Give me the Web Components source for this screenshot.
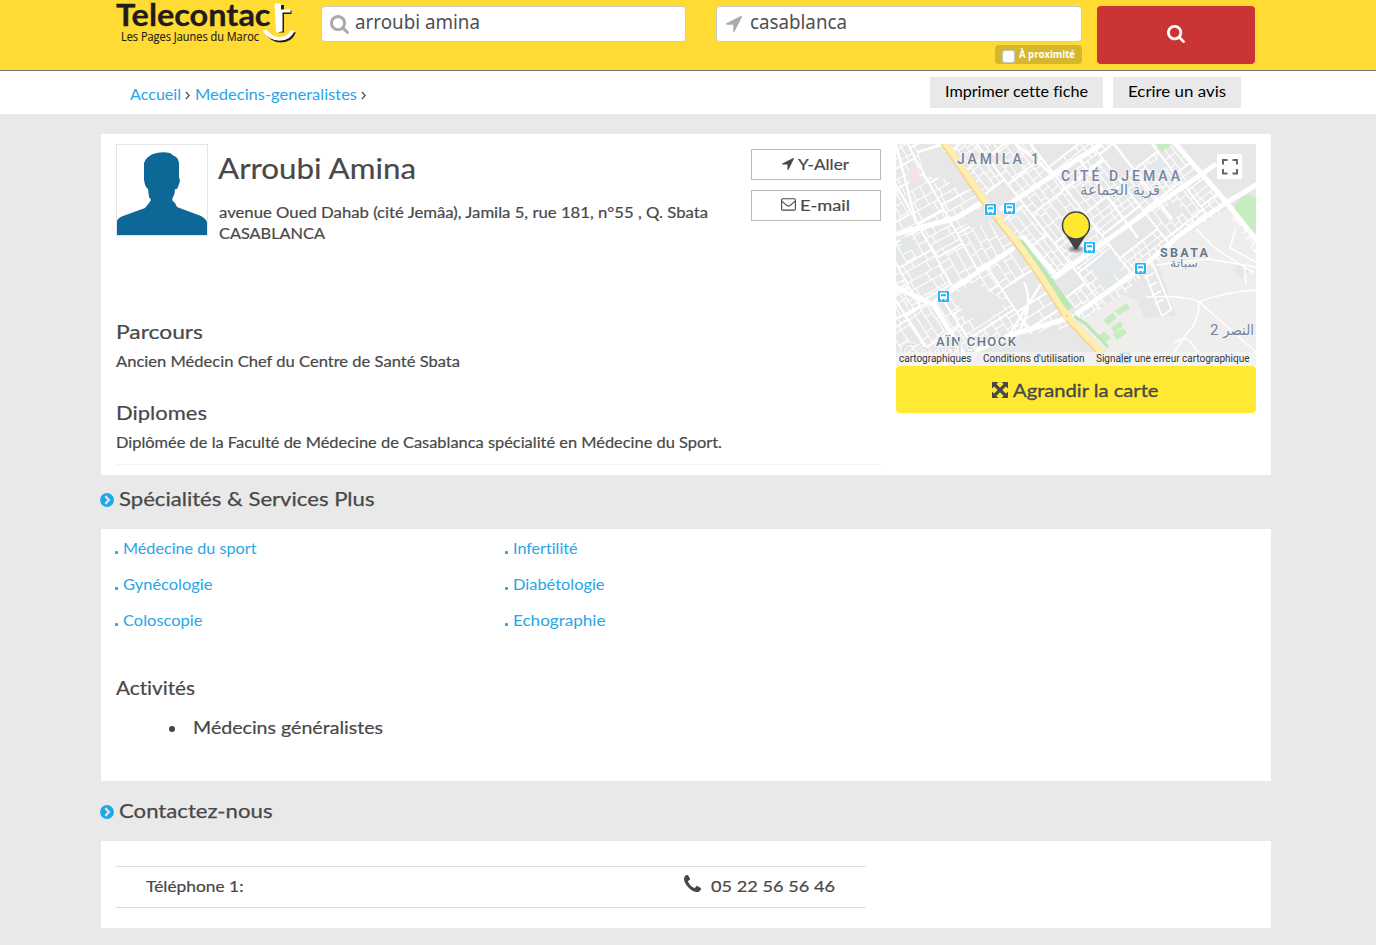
<!DOCTYPE html>
<html lang="fr">
<head>
<meta charset="utf-8">
<title>Arroubi Amina - Telecontact</title>
<style>
body{margin:0;background:#e9e9e9;color:#484848;font-family:Lato,"Noto Sans",sans-serif;font-variant-ligatures:none;height:945px;overflow:hidden}
</style>
</head>
<body>
<tc-page></tc-page>
<script>
const fits = [];
function define(name, css, html, after) {
  customElements.define(name, class extends HTMLElement {
    connectedCallback() {
      if (this.shadowRoot) return;
      const root = this.attachShadow({mode: 'open'});
      const markup = typeof html === 'function' ? html(this) : html;
      root.innerHTML = `<style>:host{display:block;box-sizing:border-box}*{box-sizing:border-box}${css}</style>${markup}`;
      if (after) after(this, root);
    }
  });
}

/* One line of text stretched to a given width: w, size, h (line height), weight. */
define('tc-text', `:host{display:inline-block;white-space:nowrap;flex:none}span{display:inline-block;transform-origin:0 50%;-webkit-text-stroke:var(--stroke,0)}`,
  el => `<style>:host{width:${el.getAttribute('w')}px;font-size:${el.getAttribute('size')}px;line-height:${el.getAttribute('h')}px;height:${el.getAttribute('h')}px;font-weight:${el.getAttribute('weight') || 400}}</style><span><slot></slot></span>`,
  (el, root) => fits.push([el, root.querySelector('span')]));

const FA = {
  search: 'M1216 832q0-185-131.5-316.5t-316.5-131.5-316.5 131.5-131.5 316.5 131.5 316.5 316.5 131.5 316.5-131.5 131.5-316.5zm512 832q0 52-38 90t-90 38q-54 0-90-38l-343-342q-179 124-399 124-143 0-273.5-55.5t-225-150-150-225-55.5-273.5 55.5-273.5 150-225 225-150 273.5-55.5 273.5 55.5 225 150 150 225 55.5 273.5q0 220-124 399l343 343q37 37 37 90z',
  arrow: 'M1593 349l-640 1280q-17 35-57 35-5 0-15-2-22-5-35.5-22.5t-13.5-39.5v-576h-576q-22 0-39.5-13.5t-22.5-35.5 4-42 29-30l1280-640q13-7 29-7 27 0 45 19 15 14 18.5 34.5t-6.5 39.5z',
  phone: 'M1600 1240q0 27-10 70.5t-21 68.5q-21 50-122 106-94 51-186 51-27 0-53-3.5t-57.5-12.5-47-14.5-55.5-20.5-49-18q-98-35-175-83-127-79-264-216t-216-264q-48-77-83-175-3-9-18-49t-20.5-55.5-14.5-47-12.5-57.5-3.5-53q0-92 51-186 56-101 106-122 25-11 68.500-21t70.500-10q14 0 21 3 18 6 53 76 11 19 30 54t35 63.500 31 53.500q3 4 17.500 25t21.500 35.500 7 28.500q0 20-28.500 50t-62 55-62 53-28.500 46q0 9 5 22.500t8.500 20.500 14 24 11.500 19q76 137 174 235t235 174q2 1 19 11.500t24 14 20.500 8.500 22.500 5q18 0 46-28.500t53-62 55-62 50-28.500q14 0 28.500 7t35.500 21.500 25 17.500q25 15 53.500 31t63.500 35 54 30q70 35 76 53 3 7 3 21z'
};
const ICONS = {
  search: `<svg viewBox="64 128 1664 1664"><path fill="currentColor" d="${FA.search}"/></svg>`,
  arrow: `<svg viewBox="190 256 1410 1410"><path fill="currentColor" d="${FA.arrow}"/></svg>`,
  phone: `<svg viewBox="192 128 1408 1408"><path fill="currentColor" d="${FA.phone}"/></svg>`,
  mail: `<svg viewBox="0 0 15 13" fill="none" stroke="currentColor" stroke-width="1.1"><rect x=".6" y=".7" width="13.8" height="11.4" rx="1.2"/><path d="M.8 3.2q2.500 2.300 4.800 4 1.900 1.500 3.800 0 2.300-1.700 4.800-4"/></svg>`,
  expand: `<svg viewBox="0 0 16 16"><path fill="currentColor" d="M.5 0h6L4.400 2.100 8 5.700l3.600-3.600L9.500 0h6q.5 0 .5.500v6l-2.100-2.100L10.300 8l3.600 3.600L16 9.500v6q0 .5-.5.500h-6l2.100-2.100L8 10.300l-3.600 3.600L6.500 16h-6Q0 16 0 15.500v-6l2.100 2.100L5.700 8 2.100 4.400 0 6.500v-6Q0 0 .5 0Z"/></svg>`,
  chevron: `<svg viewBox="0 0 14 14"><circle cx="7" cy="7" r="6.900" fill="#1ca8e8"/><path d="M5.300 3.300 9 7l-3.700 3.700" fill="none" stroke="#e9e9e9" stroke-width="2.200"/></svg>`,
  angle: `<svg viewBox="0 0 5 9"><path d="M.8.800 4.200 4.500.800 8.200" fill="none" stroke="currentColor" stroke-width="1.200"/></svg>`
};
define('tc-icon', `:host{flex:none}svg{display:block;width:100%;height:100%}`,
  el => `<style>:host{width:${el.getAttribute('s')}px;height:${el.getAttribute('hs') || el.getAttribute('s')}px}</style>${ICONS[el.getAttribute('name')]}`);

define('tc-logo', `:host{width:181px;height:46px;flex:none;position:relative;color:#1f1c1a}
  tc-text{display:block}.tag{margin:-1px 0 0 5px;font-family:"Open Sans","Noto Sans",sans-serif;--stroke:.15px #1f1c1a}
  .name{--stroke:.3px #1f1c1a}
  svg{position:absolute;left:144px;top:0}`,
  `<tc-text class="name" w="154.500" size="31" h="29" weight="700">Telecontac</tc-text>
   <tc-text class="tag" w="138" size="12" h="18">Les Pages Jaunes du Maroc</tc-text>
   <svg width="38" height="46" viewBox="0 0 38 46">
    <path d="M18 5h6v27.500h-5zM24 10.500h7.500v3.500H24z" fill="#1f1c1a"/>
    <path d="M14.500 3.500h6.500v6h9.500v3h-8V31.500l-6.500 1z" fill="#fff"/>
    <path d="M5 33q5 7 14 7.500 8 0 13.500-7.500l3.500-1q-4 10.500-15 10.500Q11 42.500 5 33z" fill="#1f1c1a"/>
    <path d="M2.500 30.500 7 30q5 7 13 7 8-.5 11-7l3.500 1q-4 9.500-14.500 9.500-11.500 0-17.500-10z" fill="#fff"/></svg>`);

define('tc-field', `:host{height:36px;background:#fff;border:1px solid #ccc;border-radius:4px;display:flex;align-items:flex-start;flex:none;color:#505050;font-family:"Noto Sans",sans-serif}
  ::slotted(tc-icon){color:#aaa}`, `<slot></slot>`);

define('tc-header', `:host{height:71px;background:#ffdb33;border-bottom:1px solid #777;display:flex;align-items:flex-start;padding:0 0 0 116px}
  .q{width:365px;margin:6px 0 0 24px}.q tc-icon{margin:8px 5.500px 0 8px}
  .where{margin:6px 0 0 30px;width:366px;display:flex;flex-direction:column;align-items:flex-end;gap:3px}
  .where tc-field{width:366px}.where tc-field tc-icon{margin:9px 8px 0 9px}
  .near{height:19px;width:87px;background:#d5b72f;border-radius:4px;display:flex;color:#fff;font-family:"Open Sans",sans-serif;padding-left:7px}
  .box{width:13px;height:13px;border:1px solid #c5c5c5;border-radius:3px;background:#fff;margin:5px 4px 0 0}
  button{width:158px;height:58px;margin:6px 0 0 15px;border:0;border-radius:4px;background:#ca3435;color:#fff;display:flex;align-items:center;justify-content:center;padding:0 0 3px}`,
  `<tc-logo></tc-logo>
   <tc-field class="q"><tc-icon name="search" s="19"></tc-icon><tc-text w="125" size="19.500" h="29">arroubi amina</tc-text></tc-field>
   <div class="where"><tc-field><tc-icon name="arrow" s="16"></tc-icon><tc-text w="97" size="19.500" h="29">casablanca</tc-text></tc-field>
   <div class="near"><i class="box"></i><tc-text w="56" size="10.500" h="18" weight="700">À proximité</tc-text></div></div>
   <button><tc-icon name="search" s="18"></tc-icon></button>`);

define('tc-action', `:host{height:31px;background:#e9e9e9;color:#000;display:flex;justify-content:center;padding-top:3px}`, `<slot></slot>`);
define('tc-crumbs', `:host{height:43px;background:#fff;display:flex;padding-left:130px;align-items:flex-start}
  .c{color:#26a5e8;margin-top:13px}.s{margin:20px 5px 0 4px;color:#444}.grow{flex:1}
  tc-action{margin-top:6px}.p{width:173px;margin-right:10px}.w{width:128px;margin-right:135px}`,
  `<tc-text class="c" w="51" size="15.500" h="21">Accueil</tc-text><tc-icon class="s" name="angle" s="5" hs="9"></tc-icon>
   <tc-text class="c" w="162" size="15.500" h="21">Medecins-generalistes</tc-text><tc-icon class="s" name="angle" s="5" hs="9"></tc-icon>
   <span class="grow"></span>
   <tc-action class="p"><tc-text w="143" size="15.500" h="22">Imprimer cette fiche</tc-text></tc-action>
   <tc-action class="w"><tc-text w="98" size="15.500" h="22">Ecrire un avis</tc-text></tc-action>`);

define('tc-card', `:host{background:#fff;width:1170px}`, `<slot></slot>`);
define('tc-title', `:host{display:flex;align-items:flex-start;height:24px;gap:5px}tc-icon{margin-top:5px}`, `<tc-icon name="chevron" s="14"></tc-icon><slot></slot>`);

define('tc-avatar', `:host{width:92px;height:92px;border:1px solid #e5e5e5;flex:none}svg{display:block}`,
  `<svg width="90" height="90" viewBox="0 0 90 90"><path fill="#0d6897" d="M0 90V76Q1 73 6 71L28 63 32 58 34 55 32 52 31 44Q28 42 27 35V18Q29 12 36 9 44 6 53 8L57 11Q61 12 62 18V32L63 36 61 42Q60 45 58 44 58 49 56 52L55 55 58 58 60 62 84 71Q89 74 90 77V90Z"/></svg>`);

define('tc-outline-button', `:host{width:130px;height:31px;border:1px solid #bbb;display:flex;align-items:center;justify-content:center;padding:0 1px 2px 0}`, `<slot></slot>`);

/* Map drawing: each city block gets its own lot size and lot direction, in a rotated frame. */
let seed = 11;
const rnd = () => (seed = (seed * 16807) % 2147483647) / 2147483647;
function streets(clip, angle, lo, hi) {
  let d = '', main = '';
  for (let bx = -300; bx < 300;) {
    const bw = 24 + rnd() * 34;
    main += `M${bx.toFixed(1)} -260v520`;
    for (let by = -260; by < 260;) {
      const bh = 18 + rnd() * 26, across = rnd() < .5, empty = rnd() < .1;
      main += `M${bx.toFixed(1)} ${by.toFixed(1)}h${bw.toFixed(1)}`;
      const long = across ? bw : bh, short = across ? bh : bw;
      for (let r = 0; r < short - .01 && !empty;) {
        const step = Math.min(short - r, lo + rnd() * (hi - lo));
        for (let q = lo * rnd(); q < long; q += lo + rnd() * lo * 2.5) {
          d += across ? `M${(bx + q).toFixed(1)} ${(by + r).toFixed(1)}v${step.toFixed(1)}` : `M${(bx + r).toFixed(1)} ${(by + q).toFixed(1)}h${step.toFixed(1)}`;
        }
        r += step;
        d += across ? `M${bx.toFixed(1)} ${(by + r).toFixed(1)}h${bw.toFixed(1)}` : `M${(bx + r).toFixed(1)} ${by.toFixed(1)}v${bh.toFixed(1)}`;
      }
      by += bh;
    }
    bx += bw;
  }
  return `<g clip-path="url(#${clip})"><g transform="translate(180 111) rotate(${angle})" fill="none" stroke="#fff"><path d="${d}" stroke-width="1.1"/><path d="${main}" stroke-width="2"/></g></g>`;
}
const bus = (x, y) => `<g transform="translate(${x} ${y})"><rect x="-6" y="-6" width="12" height="12" rx="1" fill="#fff"/><rect x="-5.500" y="-5.500" width="11" height="11" rx="1" fill="#22b4f5"/><path fill="#fff" fill-rule="evenodd" d="M-2.500-4h5q1 0 1 1v5.500h-.8V4h-1.500V2.500h-2.400V4h-1.500V2.500h-.8V-3q0-1 1-1zM-2.500-2.200v2h5v-2z"/></g>`;
const label = (x, y, w, size, t, c = '#7385a0', wt = 500) => `<text x="${x}" y="${y}" textLength="${w}" font-family="Roboto" font-size="${size}" font-weight="${wt}" fill="${c}" stroke="#f4f4f4" stroke-width="2" paint-order="stroke">${t}</text>`;
const arab = (x, y, w, size, t) => `<text x="${x}" y="${y}" direction="rtl" text-anchor="end" textLength="${w}" lengthAdjust="spacingAndGlyphs" font-family="DejaVu Sans" font-size="${size}" fill="#7385a0" stroke="#f4f4f4" stroke-width="2" paint-order="stroke">${t}</text>`;

define('tc-map', `:host{width:360px}.map{height:222px;display:block}.enlarge{height:47px;background:#ffe933;border-radius:4px;display:flex;align-items:center;justify-content:center;gap:5px;padding-right:2px}`,
  () => `<svg class="map" width="360" height="222" viewBox="0 0 360 222">
  <defs>
   <clipPath id="nw"><path d="M0 0H48L88 56 60 72 0 88zM88 60 100 76 120 100 72 134 0 180V92l60-16z"/></clipPath>
   <clipPath id="sw"><path d="M0 135 36 160 70 130 118 102 180 184 100 194 60 222H0z"/></clipPath>
   <clipPath id="ne"><path d="M52 0H280L330 60 240 128 180 165 122 96 102 68z"/></clipPath>
   <clipPath id="se"><path d="M328 60 262 110 240 132 185 166 184 178 232 148 240 138 262 118 285 92 330 66 346 80 360 98V110L328 62z"/></clipPath>
   <radialGradient id="sh"><stop stop-color="#000" stop-opacity=".55"/><stop offset="1" stop-color="#000" stop-opacity="0"/></radialGradient>
  </defs>
  <path fill="#e7e7e7" d="M0 0h360v222H0z"/>
  <path fill="#efeeed" d="M262 118 285 94 312 76 332 64 360 100V222H216L181 180 225 150 280 172z"/>
  ${streets('nw', -29, 7, 11)}${streets('sw', -33, 7, 11)}${streets('ne', -38, 5.5, 9)}${streets('se', -36, 6, 10)}
  <path fill="#e7e7e7" d="M22 8 44 3 78 44 66 48 50 35 30 32zM284 0H360V38L330 57zM66 76 88 62 98 76 76 84zM58 152l20-14 32 20-18 18-22-2zM238 150l12-10 30 32-32 2zM130 196l46-14 26 26h-60z"/>
  <path fill="#f3e3e2" d="M10 28 21 23l5 13-11 5z"/><path fill="#e1e6e9" d="M4 95 15 91l4 13-11 5z"/>
  <path fill="#e4e8eb" d="m194 122 20-18 13 19-19 21zM252 23l11-9 8 7-11 9zM268 66l11-8 8 9-11 9zM336 126l11-8 8 8-10 8z"/>
  <path fill="#c6edbf" d="M260 0h17l-12 8zM339 62q4-10 14-11l7 3v34q-10-3-15-12-8-6-6-14zM200 104l6-4 1 2-6 4z"/>
  <path fill="#c6edbf" d="m207 176 10-7 4 5-9 7zM219 167l12-8 3 5-11 7zM202 192l6-5 7 7-6 5zM215 184l9-7 3 5-9 7zM217 190l10-6 4 5-10 7z"/>
  <g fill="none" stroke="#fff" stroke-linejoin="round">
   <path stroke-width="5" d="M0 90 60 74 88 57M104 66 180 16 206 0M70 136 36 160 0 143M118 104 70 136"/>
   <path stroke-width="5" d="M158 134 206 100 250 68 306 30 320 20M180 170 240 128 285 90 328 60 362 40"/>
   <path stroke-width="5" d="M278-2 330 58 362 98M184 171 117 190 45 222M36 158 70 214M126 92l36 42"/>
   <path stroke-width="2.5" d="M0 0 20 78M48 0 22 8M156 30 120 0M182 14l60 80M218 0l58 75M128 138q10 22-4 48M150 132l-40 64"/>
   <path stroke-width="1.5" d="M250 153q40-2 53 5M360 146q-35 3-57 12 0 20-12 31l-16 24M278 199q12-10 20 4l16 19M260 121l53-6 47 8M303 158l57 50M300 85l20 20 38 24M340 84l-6 20 26 14M348 120l2 20"/>
   <path stroke-width="1.8" d="m246 122 20 50M256 118l20 48M266 172l10-7M248 134l10-5M252 143l9-5M256 152l9-5M259 160l9-5"/>
  </g>
  <path fill="none" stroke="#b8e8b3" stroke-width="6" d="M124 97 155 138 174 165"/><path fill="none" stroke="#b8e8b3" stroke-width="3" d="m178 172 12 8 22 23"/>
  <path fill="none" stroke="#f5d489" stroke-width="7.500" d="M47.500-2 88 57 121 99 143 130 170 172 184 187 220 224"/>
  <path fill="none" stroke="#ffedb1" stroke-width="6" d="M48.500-2 89 57 122 99 144 130 171 172 185 187 221 224"/><circle cx="171" cy="172" r="4.5" fill="#ffedb1"/><circle cx="171" cy="172" r="1.200" fill="#f5d489"/>
  ${label(61, 20, 82, 14, 'JAMILA 1')}${label(165, 37, 119, 14, 'CITÉ DJEMAA')}${arab(184, 51, 80, 15, 'قرية الجماعة')}
  ${label(264, 112.5, 48, 12.5, 'SBATA', '#66788f', 700)}${arab(274, 123, 28, 11, 'سباتة')}${label(40, 202, 80, 13, 'AÏN CHOCK', '#66788f')}
  <text x="314" y="191" font-family="Roboto" font-size="15" fill="#7385a0">2</text>${arab(327, 191, 31, 15, 'النصر')}
  ${bus(94.5, 65.5)}${bus(113.5, 64.5)}${bus(193.5, 103.5)}${bus(244.5, 124.5)}${bus(47.5, 152.5)}${bus(229, 214)}
  <ellipse cx="180" cy="105" rx="10" ry="4.500" fill="url(#sh)"/>
  <path fill="#434247" d="M166 85 178.500 104.500q1.500 2 3 0L194 85z"/><circle cx="180" cy="81.500" r="13.500" fill="#ffe72f" stroke="#434247" stroke-width="1.500"/>
  <text x="5" y="214" textLength="74" font-family="Lato" font-size="21" fill="#ddd" stroke="#fff" stroke-width="1.5" paint-order="stroke">Google</text>
  <path fill="#f5f5f5" opacity=".72" d="M0 208h360v14H0z"/>
  <g font-family="Roboto" font-size="10" fill="#333"><text x="3" y="218" textLength="72.5">cartographiques</text><text x="87" y="218" textLength="101.5">Conditions d'utilisation</text><text x="200" y="218" textLength="153.5">Signaler une erreur cartographique</text></g>
  <path fill="#fff" d="M321 10h25v25h-25z"/><path fill="none" stroke="#666" stroke-width="2" d="M327 20.500V16h4.500M336.500 16h4.500v4.500M341 25v4.500h-4.500M331.500 29.500H327V25"/>
  </svg>
  <div class="enlarge"><tc-icon name="expand" s="16"></tc-icon><tc-text w="145.500" size="18" h="26" style="--stroke:.35px">Agrandir la carte</tc-text></div>`);

define('tc-profile', `:host{display:flex;height:341px;padding:10px 15px 0;align-items:flex-start}
  .main{width:765px;height:321px;border-bottom:1px solid #f4f4f4;margin-left:-.5px}.top{display:flex;height:176px;margin-left:.5px}
  .who{width:543px;flex:none;padding-left:10px}.who tc-text{display:block}.who tc-text+tc-text{margin-left:1px}
  .name{margin:6px 0 16px}.buttons{display:flex;flex-direction:column;gap:10px;padding-top:5px}
  tc-outline-button{gap:4px}.t{display:block}
  tc-map{margin-left:15.500px;flex:none}.b{--stroke:.2px}`,
  `<div class="main"><div class="top"><tc-avatar></tc-avatar>
    <div class="who"><tc-text class="name b" w="198" size="28.500" h="36">Arroubi Amina</tc-text>
     <tc-text class="b" w="489" size="15.500" h="21">avenue Oued Dahab (cité Jemâa), Jamila 5, rue 181, n°55 , Q. Sbata</tc-text>
     <tc-text class="b" w="106" size="15" h="21">CASABLANCA</tc-text></div>
    <div class="buttons"><tc-outline-button><tc-icon name="arrow" s="12"></tc-icon><tc-text class="b" w="51" size="15.500" h="22">Y-Aller</tc-text></tc-outline-button>
     <tc-outline-button><tc-icon name="mail" s="15" hs="13"></tc-icon><tc-text class="b" w="50" size="15.500" h="22">E-mail</tc-text></tc-outline-button></div></div>
   <tc-text class="t b" w="87" size="19" h="24" style="margin-bottom:7px">Parcours</tc-text>
   <tc-text class="t b" w="344" size="15.500" h="21" style="margin-bottom:29px">Ancien Médecin Chef du Centre de Santé Sbata</tc-text>
   <tc-text class="t b" w="91" size="19" h="24" style="margin-bottom:7px">Diplomes</tc-text>
   <tc-text class="t b" w="606" size="15.500" h="21">Diplômée de la Faculté de Médecine de Casablanca spécialité en Médecine du Sport.</tc-text></div>
   <tc-map></tc-map>`);

define('tc-link', `:host{display:flex;height:36px;color:#26a5e8;gap:5px;margin-left:-.7px}i{width:3px;height:3px;border-radius:1px;background:#26a5e8;margin-top:13px}`, `<i></i><slot></slot>`);
define('tc-services', `:host{height:252px;padding:9px 15px 0}.grid{display:grid;grid-template-columns:390px 390px;height:138px;align-content:start}
  .a{display:block;--stroke:.2px}.li{display:flex;align-items:center;padding-left:53px;gap:18px;margin-top:15px;--stroke:.2px}.li i{width:6px;height:6px;border-radius:3px;background:#444;margin-top:3px}`,
  `<div class="grid">${[['Médecine du sport', 133.5], ['Infertilité', 64.5], ['Gynécologie', 89.5], ['Diabétologie', 91.5], ['Coloscopie', 79.5], ['Echographie', 92.5]].map(([t, w]) => `<tc-link><tc-text w="${w}" size="15.500" h="21">${t}</tc-text></tc-link>`).join('')}</div>
   <tc-text class="a" w="79" size="19" h="24">Activités</tc-text>
   <div class="li"><i></i><tc-text w="190" size="18" h="25">Médecins généralistes</tc-text></div>`);

define('tc-contact', `:host{height:87px;padding:25px 15px 0}.row{width:750px;height:42px;border:solid #ddd;border-width:1px 0;display:flex;align-items:flex-start;padding:8px 31px 0 30px;--stroke:.2px}.grow{flex:1}tc-icon{margin:0 10px 0 0}`,
  `<div class="row"><tc-text w="97.500" size="16" h="22">Téléphone 1:</tc-text><span class="grow"></span><tc-icon name="phone" s="17"></tc-icon><tc-text w="124" size="16" h="22">05 22 56 56 46</tc-text></div>`);

define('tc-page', `main{padding:20px 0 0 101px}tc-title{--stroke:.25px}.t1{margin:13px 0 17px -1px}.t2{margin:19px 0 17px -1px}tc-title tc-text{margin-top:-1px}`,
  `<tc-header></tc-header><tc-crumbs></tc-crumbs><main>
   <tc-card><tc-profile></tc-profile></tc-card>
   <tc-title class="t1"><tc-text w="255.500" size="20" h="23">Spécialités &amp; Services Plus</tc-text></tc-title>
   <tc-card><tc-services></tc-services></tc-card>
   <tc-title class="t2"><tc-text w="153.500" size="20" h="23">Contactez-nous</tc-text></tc-title>
   <tc-card><tc-contact></tc-contact></tc-card></main>`);

for (const [el, span] of fits) {
  span.style.transform = `scaleX(${+el.getAttribute('w') / span.getBoundingClientRect().width})`;
}
</script>
</body>
</html>
